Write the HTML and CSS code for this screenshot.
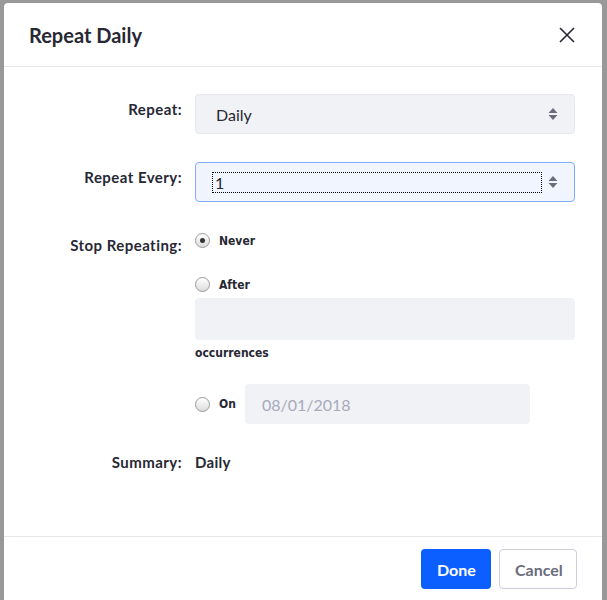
FILE: index.html
```html
<!DOCTYPE html>
<html lang="en">
<head>
<meta charset="utf-8">
<title>Repeat Daily</title>
<link rel="stylesheet" href="styles.css">
</head>
<body>
<div class="backdrop">
  <div class="modal">
    <div class="modal-header">
      <h1 class="modal-title">Repeat Daily</h1>
      <svg class="close" width="16" height="16" viewBox="0 0 16 16"><path d="M1 1 L15 15 M15 1 L1 15" stroke="#272833" stroke-width="1.6" fill="none"/></svg>
    </div>
    <div class="modal-body">
      <div class="row">
        <div class="label">Repeat:</div>
        <div class="select">
          <span class="select-text">Daily</span>
          <svg class="arrows" width="10" height="14" viewBox="0 0 10 14"><path d="M5 1 L9.5 6 H0.5 Z M5 13 L9.5 8 H0.5 Z" fill="#6b6c7e"/></svg>
        </div>
      </div>
      <div class="row">
        <div class="label">Repeat Every:</div>
        <div class="select focused">
          <span class="focus-ring">1</span>
          <svg class="arrows" width="10" height="14" viewBox="0 0 10 14"><path d="M5 1 L9.5 6 H0.5 Z M5 13 L9.5 8 H0.5 Z" fill="#6b6c7e"/></svg>
        </div>
      </div>
      <div class="row">
        <div class="label">Stop Repeating:</div>
        <div class="radios">
          <div class="radio-line"><span class="radio checked"></span><span class="radio-label">Never</span></div>
          <div class="radio-line after"><span class="radio"></span><span class="radio-label">After</span></div>
          <div class="input-box"></div>
          <div class="radio-label occ">occurrences</div>
          <div class="radio-line on"><span class="radio"></span><span class="radio-label">On</span><div class="date-box">08/01/2018</div></div>
        </div>
      </div>
      <div class="row summary">
        <div class="label">Summary:</div>
        <div class="value">Daily</div>
      </div>
    </div>
    <div class="modal-footer">
      <button class="btn primary">Done</button>
      <button class="btn secondary">Cancel</button>
    </div>
  </div>
</div>
</body>
</html>
```
FILE: styles.css
```css
html, body {
  margin: 0;
  padding: 0;
  height: 100%;
  overflow: hidden;
}
body {
  background: #999999;
  font-family: "Lato", "Open Sans", sans-serif;
  color: #272833;
}
.backdrop {
  padding: 3px 0 0 4px;
}
.modal {
  width: 598px;
  height: 620px;
  background: #ffffff;
  border-radius: 4px 4px 0 0;
  display: flex;
  flex-direction: column;
}
.modal-header {
  height: 63px;
  border-bottom: 1px solid #e7e7ed;
  display: flex;
  align-items: center;
  justify-content: space-between;
  padding: 0 27px 0 25px;
}
.modal-title {
  margin: 0;
  font-size: 20px;
  font-weight: 700;
  color: #272833;
}
.close {
  display: block;
}
.modal-body {
  padding: 27px 27px 0 0;
  height: 442px;
}
.row {
  display: grid;
  grid-template-columns: 178px 380px;
  column-gap: 13px;
  margin-bottom: 28px;
}
.label {
  text-align: right;
  font-weight: 700;
  font-size: 15px;
  letter-spacing: 0.45px;
  line-height: 20px;
  padding-top: 5px;
}
.select {
  height: 40px;
  box-sizing: border-box;
  background: #f1f2f5;
  border: 1px solid #e7e7ed;
  border-radius: 4px;
  display: flex;
  align-items: center;
  justify-content: space-between;
  padding: 0 16px 0 20px;
}
.select-text {
  font-size: 16px;
}
.select.focused {
  background: #f0f5ff;
  border-color: #80acff;
  padding-left: 16px;
}
.focus-ring {
  flex: 1;
  border: 1px dotted #000;
  height: 21px;
  box-sizing: border-box;
  font-size: 16px;
  line-height: 20px;
  padding-left: 2px;
  margin-right: 6px;
  margin-top: 1px;
}
.arrows {
  display: block;
}
.radios {
  display: flex;
  flex-direction: column;
}
.radio-line {
  display: flex;
  align-items: center;
  height: 21px;
}
.radio-line.after {
  margin-top: 23px;
}
.radio {
  width: 15px;
  height: 15px;
  box-sizing: border-box;
  border-radius: 50%;
  border: 1px solid #9a9a9a;
  background: linear-gradient(#ffffff, #dcdcdc);
  display: flex;
  align-items: center;
  justify-content: center;
  margin-right: 9px;
  flex: none;
}
.radio.checked::after {
  content: "";
  width: 5px;
  height: 5px;
  border-radius: 50%;
  background: #333;
}
.radio-label {
  font-family: "DejaVu Sans Condensed", "DejaVu Sans", sans-serif;
  font-stretch: condensed;
  font-weight: 700;
  font-size: 12px;
  color: #272833;
}
.input-box {
  margin-top: 3px;
  height: 42px;
  background: #f1f2f5;
  border-radius: 4px;
}
.occ {
  margin-top: 5px;
  line-height: 16px;
}
.radio-line.on {
  margin-top: 23px;
  height: 40px;
}
.date-box {
  margin-left: 9px;
  width: 285px;
  height: 40px;
  box-sizing: border-box;
  background: #f1f2f5;
  border-radius: 4px;
  font-size: 16px;
  color: #a7a9bc;
  display: flex;
  align-items: center;
  padding-left: 17px;
}
.row.summary .label {
  padding-top: 0;
}
.row.summary {
  margin-top: 1px;
}
.value {
  font-size: 15px;
  font-weight: 700;
  letter-spacing: 0.3px;
  line-height: 20px;
}
.modal-footer {
  border-top: 1px solid #e7e7ed;
  display: flex;
  justify-content: flex-end;
  gap: 8px;
  padding: 12px 25px 0 0;
}
.btn {
  height: 40px;
  box-sizing: border-box;
  border-radius: 4px;
  font-family: "Lato", "Open Sans", sans-serif;
  font-size: 16px;
  font-weight: 700;
  padding: 0 15px;
  border: 1px solid transparent;
}
.btn.primary {
  background: #0b5fff;
  color: #ffffff;
  width: 70px;
}
.btn.secondary {
  background: #ffffff;
  border-color: #cdced9;
  color: #6b6c7e;
  width: 78px;
}
```
